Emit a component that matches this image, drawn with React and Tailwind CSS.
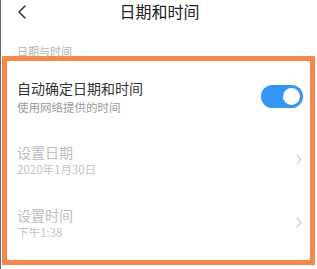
import React, { useState } from 'react'

function Chevron({ className }) {
  return (
    <svg viewBox="0 0 6 11" className={className} fill="none" stroke="currentColor" strokeWidth="1.3" strokeLinecap="round" strokeLinejoin="round">
      <path d="M1 1l4 4.5L1 10" />
    </svg>
  )
}

export default function App() {
  const [auto, setAuto] = useState(true)

  const rows = [
    { title: '设置日期', sub: '2020年1月30日' },
    { title: '设置时间', sub: '下午1:38' },
  ]

  return (
    <div
      className="w-[317px] h-[269px] bg-white border-l border-[#6b6b6b] overflow-hidden"
      style={{ fontFamily: '"Noto Sans CJK SC", "Noto Sans", sans-serif' }}
    >
      {/* Header */}
      <div className="relative h-[23px] flex items-center justify-center">
        <svg viewBox="0 0 10 14" className="absolute left-[16px] top-[5px] w-[10px] h-[14px] text-[#333]" fill="none" stroke="currentColor" strokeWidth="1.6" strokeLinecap="round" strokeLinejoin="round">
          <path d="M8 1L2 7l6 6" />
        </svg>
        <span className="text-[16px] leading-[23px] text-[#222] ml-[1px]">日期和时间</span>
      </div>

      {/* Section label */}
      <div className="pt-[23px] pl-[16px] text-[11px] leading-[10px] text-[#b3b3b3]">日期与时间</div>

      {/* Highlighted group */}
      <div className="ml-[1px] w-[313px] border-[5px] border-[#f6894a] pt-[4px] pb-[6px] pl-[10px] pr-[7px]">
        <div className="h-[63px] flex items-center justify-between">
          <div>
            <div className="text-[14px] leading-[19px] text-[#333]">自动确定日期和时间</div>
            <div className="mt-[2px] text-[11.5px] leading-[15px] text-[#9a9a9a]">使用网络提供的时间</div>
          </div>
          <button
            onClick={() => setAuto(!auto)}
            className={`w-[42px] h-[23px] rounded-full flex items-center px-[3px] ${auto ? 'bg-[#3595f2] justify-end' : 'bg-[#ddd] justify-start'}`}
          >
            <span className="w-[17px] h-[17px] rounded-full bg-white" />
          </button>
        </div>
        {rows.map((r) => (
          <div key={r.title} className="h-[63px] flex items-center justify-between">
            <div>
              <div className="text-[14px] leading-[19px] text-[#bdbdbd]">{r.title}</div>
              <div className="text-[11.5px] leading-[15px] text-[#c2c2c2]">{r.sub}</div>
            </div>
            <Chevron className="w-[6px] h-[11px] mr-[1px] text-[#d2d2d2]" />
          </div>
        ))}
      </div>
    </div>
  )
}
